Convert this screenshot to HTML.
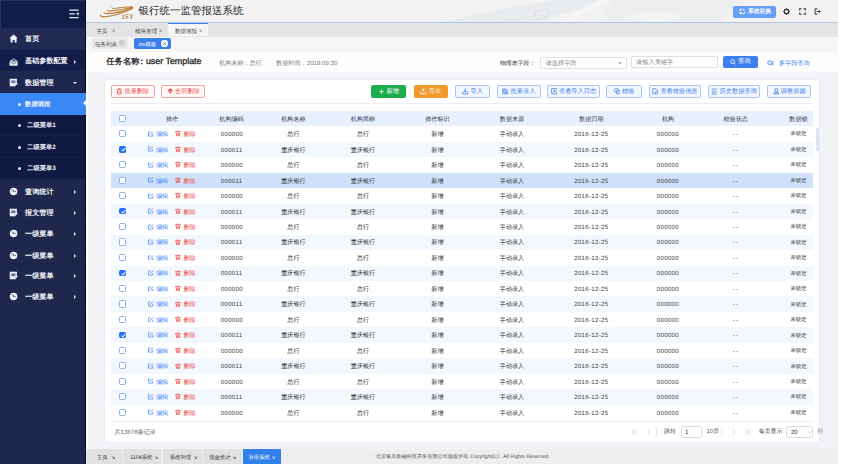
<!DOCTYPE html>
<html><head><meta charset="utf-8">
<style>
*{margin:0;padding:0;box-sizing:border-box}
html,body{width:841px;height:464px;overflow:hidden;background:#fff;font-family:"Liberation Sans",sans-serif;text-rendering:geometricPrecision}
.abs{position:absolute}
#side{position:absolute;left:0;top:0;width:86px;height:464px;background:#1f284c;border-right:1px solid #050c32}
#side .top{position:absolute;left:0;top:0;width:85px;height:28px;background:#101d48;border-top:1px solid #26305a;border-left:1px solid #26305a}
.mi{position:absolute;left:0;width:85px;color:#f2f4fa;font-size:6.9px;font-weight:bold}
.mi .t{position:absolute;transform:translateY(-50%);white-space:nowrap;line-height:1}
.mi .ic{position:absolute;left:8.6px;width:9.2px;height:9.2px}
.mi .ar{position:absolute;left:73.5px;margin-top:-2px;width:0;height:0;border-left:2.6px solid #e6e9f2;border-top:2px solid transparent;border-bottom:2px solid transparent}
.mi .dn{position:absolute;left:72.5px;margin-top:-1px;width:0;height:0;border-top:2.6px solid #e6e9f2;border-left:2.2px solid transparent;border-right:2.2px solid transparent}
.mi .dot{position:absolute;left:17.5px;width:3.1px;height:3.1px;border-radius:50%;background:#e8f0ff}
.act .notch{position:absolute;right:0;top:50%;margin-top:-3.5px;width:0;height:0;border-right:3.5px solid #f4f5f8;border-top:3.5px solid transparent;border-bottom:3.5px solid transparent}
#hdr{position:absolute;left:86px;top:0;width:752px;height:23px;background:#f2f2f2;border-bottom:1px solid #b4c4dc;overflow:hidden}
#tabs{position:absolute;left:86px;top:23px;width:752px;height:14px;background:#e4e4e4}
.tab{position:absolute;top:0;height:14px;font-size:5.55px;color:#444;line-height:14px;white-space:nowrap}
#subtabs{position:absolute;left:86px;top:37px;width:752px;height:14.5px;background:#f5f5f5}
.chip{position:absolute;top:1.8px;height:10px;border-radius:2px;font-size:5.5px;line-height:10.4px;padding-top:2px;white-space:nowrap;padding-left:3px}
#titlerow{position:absolute;left:86px;top:51.5px;width:752px;height:20.5px;background:#fdfdfd}
#page{position:absolute;left:88px;top:72px;width:750px;height:378px;background:#f2f3f7}
#card{position:absolute;left:103.5px;top:78.5px;width:716.5px;height:364px;background:#fff;border-radius:2px;border:0.6px solid #e8ecf3}
.btn{position:absolute;top:85.3px;height:12.3px;border-radius:2px;font-size:6.2px;white-space:nowrap;display:flex;align-items:center;justify-content:center}
.btn span{position:relative;top:0.35px}
.btn svg{margin-right:1.8px;flex:none}
.ob{border:0.8px solid #a9c7f4;background:#f2f7ff;color:#3a7ce8}
.rb{border:0.8px solid #f4a0a0;background:#fff9f9;color:#ee4f4f}
#thead{position:absolute;left:111px;top:110.6px;width:702px;height:15.7px;background:#e9f0fd}
.th{position:absolute;top:1.2px;line-height:15.7px;transform:translateX(-50%);font-size:6.1px;font-weight:500;color:#2d3450;white-space:nowrap}
.tr{position:absolute;left:111px;width:702px;height:15.47px}
.c{position:absolute;top:0.9px;line-height:15.47px;font-size:6.1px;color:#2a2a2a;white-space:nowrap}
.c.cc{transform:translateX(-50%)}
.c.sm{font-size:5.3px;color:#383838;top:1.2px}
.num{letter-spacing:0.3px;color:#3c3c3c}
.cb{position:absolute;left:8px;top:3.9px;width:7.1px;height:7.2px;border:0.9px solid #8ab2f4;border-radius:1.5px;background:#fff;display:block}
.cb.ck{background:#1f6ff2;border-color:#1f6ff2;top:4.2px;width:6.9px;height:6.6px}
.cb svg{position:absolute;left:-0.5px;top:-0.5px;width:6.8px;height:6.8px}
.ei{position:absolute;left:37.1px;top:4.6px}
.di{position:absolute;left:64px;top:4.2px}
</style></head><body>

<!-- sidebar -->
<div id="side"><div class="top"><svg class="abs" style="left:67.6px;top:8px" width="10" height="9.5" viewBox="0 0 10 9.5"><path d="M0.3 1H9.6M0.3 8.5H9.6M0.3 4.75H5.8" stroke="#e6e9f2" stroke-width="1.25"/><path d="M9.6 3L7 4.75L9.6 6.5Z" fill="#e6e9f2"/></svg></div>
<div class="mi n" style="top:28px;height:22px;background:#232a52;border-bottom:0.8px solid #1a2246"><svg class="ic" style="top:6.20px" viewBox="0 0 10 10"><path d="M5 0.6L0.4 4.6H1.7V9.2H4V6.6H6V9.2H8.3V4.6H9.6Z" fill="#eef0f8"/></svg><span class="t" style="left:25.1px;top:11.90px;font-size:7.1px">首页</span></div>
<div class="mi r" style="top:50px;height:21px;background:#131c48;border-bottom:0.8px solid #1a2246"><svg class="ic" style="top:6.70px" viewBox="0 0 10 10"><path d="M0.6 4.6L5 1.4L9.4 4.6V9.4H0.6Z" fill="#eef0f8"/><path d="M0.6 4.6L5 7.6L9.4 4.6" stroke="#1f284c" stroke-width="0.7" fill="none"/><circle cx="5.2" cy="3.6" r="2.1" fill="#6a76a8"/></svg><span class="t" style="left:25.1px;top:12.40px;font-size:7.1px">基础参数配置</span><i class="ar" style="top:11.70px"></i></div>
<div class="mi d" style="top:71px;height:22px;background:#1f2750;border-bottom:0.8px solid #1a2246"><svg class="ic" style="top:6.90px" viewBox="0 0 10 10"><path d="M0.8 0.8H8.6V5.8L5.8 9H0.8Z" fill="#eef0f8"/><rect x="2.4" y="2.6" width="4.6" height="3" fill="#6a76a8"/><path d="M6 9.2L9.4 5.8" stroke="#eef0f8" stroke-width="1"/></svg><span class="t" style="left:25.1px;top:12.60px;font-size:7.1px">数据管理</span><i class="dn" style="top:11.50px"></i></div>
<div class="mi act" style="top:93px;height:21.8px;width:86px;background:#3a87f6;border-bottom:none"><i class="dot" style="top:10.10px"></i><span class="t" style="left:25.1px;top:12.10px;font-size:6.3px">数据填报</span><i class="notch"></i></div>
<div class="mi sub" style="top:115px;height:21px;background:#0f1942;border-bottom:0.8px solid #17204a"><i class="dot" style="top:9.10px"></i><span class="t" style="left:27.1px;top:11.10px;font-size:6.3px">二级菜单1</span></div>
<div class="mi sub" style="top:136px;height:22px;background:#0f1942;border-bottom:0.8px solid #17204a"><i class="dot" style="top:9.80px"></i><span class="t" style="left:27.1px;top:11.80px;font-size:6.3px">二级菜单2</span></div>
<div class="mi sub" style="top:158px;height:21px;background:#0f1942;border-bottom:0.8px solid #17204a"><i class="dot" style="top:9.10px"></i><span class="t" style="left:27.1px;top:11.10px;font-size:6.3px">二级菜单3</span></div>
<div class="mi r" style="top:179px;height:21.8px;background:#1f284c;border-bottom:0.8px solid #1a2246"><svg class="ic" style="top:8.40px" viewBox="0 0 10 10"><circle cx="5" cy="5" r="4.1" fill="#eef0f8"/><path d="M2.6 3.2Q4.2 2.6 5 4.2Q6 5.6 7.4 4.8" stroke="#5a6696" stroke-width="1" fill="none"/><circle cx="5" cy="4.6" r="0.9" fill="#5a6696"/></svg><span class="t" style="left:25.1px;top:14.10px;font-size:7.1px">查询统计</span><i class="ar" style="top:13.40px"></i></div>
<div class="mi r" style="top:200.8px;height:21.4px;background:#1f284c;border-bottom:0.8px solid #1a2246"><svg class="ic" style="top:7.60px" viewBox="0 0 10 10"><path d="M0.8 0.8H8.6V5.8L5.8 9H0.8Z" fill="#eef0f8"/><rect x="2.4" y="2.6" width="4.6" height="3" fill="#6a76a8"/><path d="M6 9.2L9.4 5.8" stroke="#eef0f8" stroke-width="1"/></svg><span class="t" style="left:25.1px;top:13.30px;font-size:7.1px">报文管理</span><i class="ar" style="top:12.60px"></i></div>
<div class="mi r" style="top:222.2px;height:20.8px;background:#1f284c;border-bottom:0.8px solid #1a2246"><svg class="ic" style="top:6.70px" viewBox="0 0 10 10"><circle cx="5" cy="5" r="4.1" fill="#eef0f8"/><path d="M2.6 3.2Q4.2 2.6 5 4.2Q6 5.6 7.4 4.8" stroke="#5a6696" stroke-width="1" fill="none"/><circle cx="5" cy="4.6" r="0.9" fill="#5a6696"/></svg><span class="t" style="left:25.1px;top:12.40px;font-size:7.1px">一级菜单</span><i class="ar" style="top:11.70px"></i></div>
<div class="mi r" style="top:243px;height:21px;background:#1f284c;border-bottom:0.8px solid #1a2246"><svg class="ic" style="top:7.90px" viewBox="0 0 10 10"><circle cx="5" cy="5" r="4.1" fill="#eef0f8"/><path d="M2.6 3.2Q4.2 2.6 5 4.2Q6 5.6 7.4 4.8" stroke="#5a6696" stroke-width="1" fill="none"/><circle cx="5" cy="4.6" r="0.9" fill="#5a6696"/></svg><span class="t" style="left:25.1px;top:13.60px;font-size:7.1px">一级菜单</span><i class="ar" style="top:12.90px"></i></div>
<div class="mi r" style="top:264px;height:20.5px;background:#1f284c;border-bottom:0.8px solid #1a2246"><svg class="ic" style="top:7.20px" viewBox="0 0 10 10"><path d="M0.8 0.8H8.6V5.8L5.8 9H0.8Z" fill="#eef0f8"/><rect x="2.4" y="2.6" width="4.6" height="3" fill="#6a76a8"/><path d="M6 9.2L9.4 5.8" stroke="#eef0f8" stroke-width="1"/></svg><span class="t" style="left:25.1px;top:12.90px;font-size:7.1px">一级菜单</span><i class="ar" style="top:12.20px"></i></div>
<div class="mi r" style="top:284.5px;height:20.8px;background:#1f284c;border-bottom:0.8px solid #1a2246"><svg class="ic" style="top:7.40px" viewBox="0 0 10 10"><circle cx="5" cy="5" r="4.1" fill="#eef0f8"/><path d="M2.6 3.2Q4.2 2.6 5 4.2Q6 5.6 7.4 4.8" stroke="#5a6696" stroke-width="1" fill="none"/><circle cx="5" cy="4.6" r="0.9" fill="#5a6696"/></svg><span class="t" style="left:25.1px;top:13.10px;font-size:7.1px">一级菜单</span><i class="ar" style="top:12.40px"></i></div>
</div>
<!-- header -->
<div id="hdr">
  <svg class="abs" style="left:-86px;top:0px" width="140" height="22" viewBox="0 0 140 22">
    <g fill="none" stroke="#bb7e3a" stroke-linecap="round">
      <path d="M100.4 15.3Q101.3 17.2 104 16.9Q117 15.8 132.5 8.5" stroke-width="1.35"/>
      <path d="M104 12.5Q104.8 13.8 107 13.7Q119 13.2 132.5 7.9" stroke-width="1.2"/>
      <path d="M107.3 10.2Q108 11.2 110 11.1Q121 10 132.5 7.3" stroke-width="1.1"/>
      <path d="M111.8 7.9Q112.5 8.7 114.5 8.4Q123 7.2 132.5 6.7" stroke-width="1"/>
    </g>
    <text x="121.7" y="18.7" font-family="Liberation Serif" font-size="7" font-weight="bold" letter-spacing="0.3" fill="#b9803e">IST</text>
  </svg>
  <svg class="abs" style="left:0;top:0" width="752" height="22" viewBox="86 0 752 22">
    <g opacity="0.55">
      <path d="M440 22L520 6L560 0H600L540 22Z" fill="#e3e8ec"/>
      <path d="M470 18L560 2" stroke="#dde3e8" stroke-width="1.2"/>
      <path d="M500 22L585 8" stroke="#d6dde3" stroke-width="1"/>
      <path d="M555 22L600 0H612L570 22Z" fill="#f8f9fa"/>
      <rect x="535" y="10" width="14" height="8" transform="rotate(-20 542 14)" fill="none" stroke="#d8c4c8" stroke-width="0.8"/>
      <path d="M612 0L600 22H720L740 0Z" fill="#e9ecef"/>
      <ellipse cx="655" cy="17" rx="26" ry="5" fill="#f4f5f6"/>
      <path d="M630 8H700" stroke="#e0e4e8" stroke-width="2"/>
    </g>
  </svg>
  <div class="abs" style="left:52.5px;top:5.2px;font-size:10.5px;font-weight:500;color:#2a2a2a;white-space:nowrap">银行统一监管报送系统</div>
  <div class="abs" style="left:647px;top:5.5px;width:43px;height:12px;background:#66a0f5;border-radius:2px;color:#fff;font-size:5.8px;line-height:12px;white-space:nowrap">
    <svg class="abs" style="left:5.8px;top:2.8px" width="6.6" height="6.6" viewBox="0 0 10 10"><path d="M1.2 4.6A3.6 3.6 0 0 1 4.4 1.2" stroke="#fff" stroke-width="1.6" fill="none"/><circle cx="7.2" cy="2.8" r="1.6" fill="#d8e6fc"/><rect x="1" y="6" width="3.4" height="3.2" rx="0.6" fill="#fff"/><path d="M8.8 5.6A3.6 3.6 0 0 1 5.6 8.8" stroke="#fff" stroke-width="1.6" fill="none"/></svg>
    <span class="abs" style="left:15px;top:0.5px;font-weight:bold">系统切换</span>
  </div>
  <svg class="abs" style="left:697px;top:8px" width="7" height="7" viewBox="0 0 10 10"><circle cx="5" cy="5" r="3.2" fill="none" stroke="#333" stroke-width="1.8"/><path d="M5 0.5V2M5 8V9.5M0.5 5H2M8 5H9.5M1.8 1.8L2.8 2.8M7.2 7.2L8.2 8.2M1.8 8.2L2.8 7.2M7.2 2.8L8.2 1.8" stroke="#333" stroke-width="1.5"/></svg>
  <svg class="abs" style="left:712.5px;top:8px" width="7" height="7" viewBox="0 0 10 10"><path d="M1 3.5V1H3.5M6.5 1H9V3.5M9 6.5V9H6.5M3.5 9H1V6.5" stroke="#333" stroke-width="1.6" fill="none"/></svg>
  <svg class="abs" style="left:727.5px;top:8px" width="7" height="7" viewBox="0 0 10 10"><path d="M5 1.2H1.5V8.8H5" stroke="#333" stroke-width="1.4" fill="none"/><path d="M3.8 5H9M7 3L9 5L7 7" stroke="#333" stroke-width="1.3" fill="none"/></svg>
</div>

<!-- tabs -->
<div id="tabs">
  <div class="tab" style="left:10.5px;top:1.5px">主页</div><div class="abs" style="left:0;top:0"><svg width="3.4" height="3.4" viewBox="0 0 4 4" style="position:absolute;left:25.8px;top:6px"><path d="M0.4 0.4L3.6 3.6M3.6 0.4L0.4 3.6" stroke="#555" stroke-width="0.6"/></svg></div>
  <div class="tab" style="left:49px;top:1.5px">模块管理</div><div class="abs" style="left:0;top:0"><svg width="3.4" height="3.4" viewBox="0 0 4 4" style="position:absolute;left:72.8px;top:6px"><path d="M0.4 0.4L3.6 3.6M3.6 0.4L0.4 3.6" stroke="#555" stroke-width="0.6"/></svg></div>
  <div class="abs" style="left:82.4px;top:0;width:39.7px;height:13.2px;background:#f5f5f5;border-top:1px solid #3d86f0"></div>
  <div class="tab" style="left:88.9px;top:1.5px">数据填报</div><div class="abs" style="left:0;top:0"><svg width="3.4" height="3.4" viewBox="0 0 4 4" style="position:absolute;left:112.7px;top:6px"><path d="M0.4 0.4L3.6 3.6M3.6 0.4L0.4 3.6" stroke="#555" stroke-width="0.6"/></svg></div>
</div>
<div id="subtabs">
  <div class="chip" style="left:6.2px;width:35.5px;height:10.4px;top:1.2px;background:#e8e8e8;color:#4a4a4a;padding-left:2.8px">任务列表<span class="abs" style="left:27.1px;top:2.2px;width:6px;height:6px;border-radius:50%;background:#c8c8c8"></span><svg width="3.4" height="3.4" viewBox="0 0 4 4" style="position:absolute;left:28.4px;top:3.5px"><path d="M0.4 0.4L3.6 3.6M3.6 0.4L0.4 3.6" stroke="#f4f4f4" stroke-width="0.8"/></svg></div>
  <div class="chip" style="left:48.4px;width:36.3px;height:10.4px;top:1.2px;background:#3a7ee8;color:#fff;padding-left:4.1px"><span style="font-size:5.3px">dis</span>模板<span class="abs" style="left:27px;top:2.2px;width:6.2px;height:6.2px;border-radius:50%;background:#fff"></span><svg width="3.4" height="3.4" viewBox="0 0 4 4" style="position:absolute;left:28.4px;top:3.6px"><path d="M0.4 0.4L3.6 3.6M3.6 0.4L0.4 3.6" stroke="#3a7ee8" stroke-width="0.9"/></svg></div>
</div>

<!-- title row -->
<div id="titlerow">
  <div class="abs" style="left:20.3px;top:4.5px;font-size:8.3px;font-weight:bold;color:#262626;white-space:nowrap">任务名称<span style="margin-left:-1.9px">：</span><span style="font-size:8.9px;font-weight:normal;-webkit-text-stroke:0.3px #262626">user Template</span></div>
  <div class="abs" style="left:133.3px;top:7.1px;font-size:6.1px;color:#7a7a7a;white-space:nowrap">机构名称：总行</div>
  <div class="abs" style="left:190.3px;top:7.1px;font-size:6.1px;color:#7a7a7a;white-space:nowrap">数据时间：2019.09.30</div>
  <div class="abs" style="left:414px;top:7.3px;font-size:5.85px;color:#333;white-space:nowrap">物理表字段：</div>
  <div class="abs" style="left:453.6px;top:5px;width:87.4px;height:12px;border:0.8px solid #dcdfe6;border-radius:2px;background:#fff;font-size:6.15px;color:#8a8a8a;line-height:11.4px;padding-left:5px;white-space:nowrap">请选择字段<svg class="abs" style="left:77.5px;top:4.8px" width="4" height="2.5" viewBox="0 0 8 5"><path d="M0.5 0.5H7.5L4 4.5Z" fill="#999"/></svg></div>
  <div class="abs" style="left:544.6px;top:4.4px;width:87.4px;height:12px;border:0.8px solid #dcdfe6;border-radius:2px;background:#fff;font-size:6.2px;color:#8a8a8a;line-height:11.4px;padding-left:4.5px;white-space:nowrap">请输入关键字</div>
  <div class="abs" style="left:637.4px;top:4.4px;width:34.6px;height:12px;border-radius:2px;background:#3b7ff0;font-size:6.3px;color:#fff;line-height:12.6px;white-space:nowrap"><svg class="abs" style="left:7px;top:3.2px" width="6" height="6" viewBox="0 0 10 10"><circle cx="4.3" cy="4.3" r="3.2" stroke="#fff" stroke-width="1.4" fill="none"/><path d="M6.6 6.6L9 9" stroke="#fff" stroke-width="1.4"/></svg><span class="abs" style="left:14.6px">查询</span></div>
  <svg class="abs" style="left:681.3px;top:8px" width="8" height="6" viewBox="0 0 12 9"><circle cx="4" cy="4" r="2.8" stroke="#3b7ff0" stroke-width="1.3" fill="none"/><path d="M6 6L7.6 7.8M9 1.5V7.5" stroke="#3b7ff0" stroke-width="1.2"/></svg>
  <div class="abs" style="left:693px;top:7.5px;font-size:6.1px;color:#3b7ff0;white-space:nowrap">多字段查询</div>
</div>

<div id="page"></div>
<div id="card"></div>
<!-- buttons -->
<div class="btn rb" style="left:110.6px;width:44.2px"><svg width="6.5" height="6.5" viewBox="0 0 10 10"><path d="M1 2.6H9M3.6 2.6V1H6.4V2.6M2.2 3.8V9.2H7.8V3.8M2.2 6.2H7.8" stroke="#ee4f4f" stroke-width="1.2" fill="none"/></svg><span>批量删除</span></div>
<div class="btn rb" style="left:161.2px;width:43.8px"><svg width="6.5" height="6.5" viewBox="0 0 10 10"><path d="M1.2 4.2L3.6 1.2H6.6L9 4.2L5 9.2Z" fill="#ee4f4f"/><path d="M3.2 4.2L5 6.6L7 4.2" stroke="#fff" stroke-width="0.9" fill="none"/></svg><span>全部删除</span></div>
<div class="btn ob" style="left:455.1px;width:34.8px"><svg width="6.5" height="6.5" viewBox="0 0 10 10"><path d="M5 0.8V6.2M2.8 4L5 6.2L7.2 4M1 5.6V8.9H9V5.6" stroke="#3a7ce8" stroke-width="1.3" fill="none"/></svg><span>导入</span></div>
<div class="btn ob" style="left:497px;width:43.6px"><svg width="6.5" height="6.5" viewBox="0 0 10 10"><path d="M8.6 4.8V8.8H1.2V1.4H5.2" stroke="#3a7ce8" stroke-width="1.2" fill="none"/><path d="M4 6L8.8 1.2" stroke="#3a7ce8" stroke-width="1.2"/><circle cx="4.9" cy="5.1" r="2.6" stroke="#3a7ce8" stroke-width="1.1" fill="none"/></svg><span>批量录入</span></div>
<div class="btn ob" style="left:547px;width:52.8px"><svg width="6.5" height="6.5" viewBox="0 0 10 10"><path d="M8.8 3V1H1V9H8.8V7" stroke="#3a7ce8" stroke-width="1.2" fill="none"/><path d="M9.2 5H4.2M6 3.2L4.2 5L6 6.8" stroke="#3a7ce8" stroke-width="1.2" fill="none"/></svg><span>查看导入日志</span></div>
<div class="btn ob" style="left:606.2px;width:35.5px"><svg width="6.5" height="6.5" viewBox="0 0 10 10"><rect x="0.9" y="0.9" width="5.6" height="5.6" rx="1.6" stroke="#3a7ce8" stroke-width="1.1" fill="none"/><rect x="3.5" y="3.5" width="5.6" height="5.6" rx="1.6" stroke="#3a7ce8" stroke-width="1.1" fill="none"/></svg><span>校验</span></div>
<div class="btn ob" style="left:648.6px;width:52.4px"><svg width="6.5" height="6.5" viewBox="0 0 10 10"><path d="M5.5 9H1.2V1H6.2L8.4 3.2V5.2" stroke="#3a7ce8" stroke-width="1.1" fill="none"/><circle cx="6.8" cy="7.2" r="2.2" stroke="#3a7ce8" stroke-width="1" fill="none"/><path d="M5.8 7.2L6.6 8L7.9 6.6" stroke="#3a7ce8" stroke-width="0.8" fill="none"/></svg><span>查看校验信息</span></div>
<div class="btn ob" style="left:707.8px;width:52.4px"><svg width="6.5" height="6.5" viewBox="0 0 10 10"><path d="M1 1.5H9M1 4.3H5.5M1 7.1H5.5M1 9.4H9" stroke="#3a7ce8" stroke-width="1.1" fill="none"/><path d="M7 4V7.6L9.4 5.8Z" fill="#3a7ce8"/></svg><span>历史数据查询</span></div>
<div class="btn ob" style="left:767.2px;width:43.8px"><svg width="6.5" height="6.5" viewBox="0 0 10 10"><circle cx="5" cy="3.2" r="2.3" stroke="#3a7ce8" stroke-width="1.15" fill="none"/><path d="M1.2 9.2Q1.2 5.8 5 5.8Q8.8 5.8 8.8 9.2Z" stroke="#3a7ce8" stroke-width="1.15" fill="none"/><path d="M3.6 7.6H6.4" stroke="#3a7ce8" stroke-width="0.9"/></svg><span>调整原因</span></div>
<div class="btn" style="left:371.4px;width:35px;background:#1cad4e;color:#fff;border:none"><svg width="5.2" height="5.2" viewBox="0 0 10 10" style="margin-right:2.4px"><path d="M5 0.5V9.5M0.5 5H9.5" stroke="#fff" stroke-width="1.5"/></svg><span>新增</span></div>
<div class="btn" style="left:413.5px;width:34.5px;background:#f0992c;color:#fff;border:none"><svg width="6.5" height="6.5" viewBox="0 0 10 10"><path d="M5 6.6V1.2M2.8 3.4L5 1.2L7.2 3.4M1 5.6V8.9H9V5.6" stroke="#fff" stroke-width="1.3" fill="none"/></svg><span>导出</span></div>
<div class="abs" style="left:110.8px;top:103px;width:702px;height:0.8px;background:#eceef2"></div>

<!-- table header -->
<div id="thead">
  <i class="cb" style="top:4.5px"></i>
  <span class="th" style="left:61px">操作</span>
  <span class="th" style="left:120.5px">机构编码</span>
  <span class="th" style="left:182.4px">机构名称</span>
  <span class="th" style="left:252px">机构简称</span>
  <span class="th" style="left:326.4px">操作标识</span>
  <span class="th" style="left:401px">数据来源</span>
  <span class="th" style="left:480.5px">数据日期</span>
  <span class="th" style="left:557px">机构</span>
  <span class="th" style="left:624.7px">校验状态</span>
  <span class="th" style="left:687.5px">数据锁</span>
</div>
<div class="tr" style="top:126.30px;background:#ffffff"><i class="cb"></i><svg class="ei" width="5.6" height="5.8" viewBox="0 0 10 10"><path d="M8.6 5V9H1V1.4H5" stroke="#3d87f5" stroke-width="1.25" fill="none"/><path d="M3.8 6.3L9.2 0.9" stroke="#3d87f5" stroke-width="1.4"/></svg><span class="c l" style="left:45px;color:#3d87f5">编辑</span><svg class="di" width="5.8" height="6.2" viewBox="0 0 10 11"><path d="M5 0.6V2.2M0.8 2.6H9.2V4.4M0.8 2.6V4.4M2.2 5.2H7.8V10.2H2.2Z M2.2 7.6H7.8" stroke="#f04848" stroke-width="1.3" fill="none"/></svg><span class="c l" style="left:72.4px;color:#f04848">删除</span><span class="c num" style="left:109.8px">000000</span><span class="c cc" style="left:182.4px">总行</span><span class="c cc" style="left:252px">总行</span><span class="c cc" style="left:326.4px">新增</span><span class="c cc" style="left:401px">手动录入</span><span class="c num" style="left:463.2px">2016-12-25</span><span class="c num" style="left:545.8px">000000</span><span class="c cc" style="left:624.7px;color:#555;letter-spacing:0.9px">--</span><span class="c cc sm" style="left:687.5px">未锁定</span></div>
<div class="tr" style="top:141.77px;background:#f3f8ff"><i class="cb ck"><svg viewBox="0 0 10 10"><path d="M2.3 5.2 L4.2 7 L7.8 3.2" stroke="#fff" stroke-width="1.5" fill="none"/></svg></i><svg class="ei" width="5.6" height="5.8" viewBox="0 0 10 10"><path d="M8.6 5V9H1V1.4H5" stroke="#3d87f5" stroke-width="1.25" fill="none"/><path d="M3.8 6.3L9.2 0.9" stroke="#3d87f5" stroke-width="1.4"/></svg><span class="c l" style="left:45px;color:#3d87f5">编辑</span><svg class="di" width="5.8" height="6.2" viewBox="0 0 10 11"><path d="M5 0.6V2.2M0.8 2.6H9.2V4.4M0.8 2.6V4.4M2.2 5.2H7.8V10.2H2.2Z M2.2 7.6H7.8" stroke="#f04848" stroke-width="1.3" fill="none"/></svg><span class="c l" style="left:72.4px;color:#f04848">删除</span><span class="c num" style="left:109.8px">000011</span><span class="c cc" style="left:182.4px">重庆银行</span><span class="c cc" style="left:252px">重庆银行</span><span class="c cc" style="left:326.4px">新增</span><span class="c cc" style="left:401px">手动录入</span><span class="c num" style="left:463.2px">2016-12-25</span><span class="c num" style="left:545.8px">000000</span><span class="c cc" style="left:624.7px;color:#555;letter-spacing:0.9px">--</span><span class="c cc sm" style="left:687.5px">未锁定</span></div>
<div class="tr" style="top:157.24px;background:#ffffff"><i class="cb"></i><svg class="ei" width="5.6" height="5.8" viewBox="0 0 10 10"><path d="M8.6 5V9H1V1.4H5" stroke="#3d87f5" stroke-width="1.25" fill="none"/><path d="M3.8 6.3L9.2 0.9" stroke="#3d87f5" stroke-width="1.4"/></svg><span class="c l" style="left:45px;color:#3d87f5">编辑</span><svg class="di" width="5.8" height="6.2" viewBox="0 0 10 11"><path d="M5 0.6V2.2M0.8 2.6H9.2V4.4M0.8 2.6V4.4M2.2 5.2H7.8V10.2H2.2Z M2.2 7.6H7.8" stroke="#f04848" stroke-width="1.3" fill="none"/></svg><span class="c l" style="left:72.4px;color:#f04848">删除</span><span class="c num" style="left:109.8px">000000</span><span class="c cc" style="left:182.4px">总行</span><span class="c cc" style="left:252px">总行</span><span class="c cc" style="left:326.4px">新增</span><span class="c cc" style="left:401px">手动录入</span><span class="c num" style="left:463.2px">2016-12-25</span><span class="c num" style="left:545.8px">000000</span><span class="c cc" style="left:624.7px;color:#555;letter-spacing:0.9px">--</span><span class="c cc sm" style="left:687.5px">未锁定</span></div>
<div class="tr" style="top:172.71px;background:#cfe1fb"><i class="cb"></i><svg class="ei" width="5.6" height="5.8" viewBox="0 0 10 10"><path d="M8.6 5V9H1V1.4H5" stroke="#3d87f5" stroke-width="1.25" fill="none"/><path d="M3.8 6.3L9.2 0.9" stroke="#3d87f5" stroke-width="1.4"/></svg><span class="c l" style="left:45px;color:#3d87f5">编辑</span><svg class="di" width="5.8" height="6.2" viewBox="0 0 10 11"><path d="M5 0.6V2.2M0.8 2.6H9.2V4.4M0.8 2.6V4.4M2.2 5.2H7.8V10.2H2.2Z M2.2 7.6H7.8" stroke="#f04848" stroke-width="1.3" fill="none"/></svg><span class="c l" style="left:72.4px;color:#f04848">删除</span><span class="c num" style="left:109.8px">000011</span><span class="c cc" style="left:182.4px">重庆银行</span><span class="c cc" style="left:252px">重庆银行</span><span class="c cc" style="left:326.4px">新增</span><span class="c cc" style="left:401px">手动录入</span><span class="c num" style="left:463.2px">2016-12-25</span><span class="c num" style="left:545.8px">000000</span><span class="c cc" style="left:624.7px;color:#555;letter-spacing:0.9px">--</span><span class="c cc sm" style="left:687.5px">未锁定</span></div>
<div class="tr" style="top:188.18px;background:#ffffff"><i class="cb"></i><svg class="ei" width="5.6" height="5.8" viewBox="0 0 10 10"><path d="M8.6 5V9H1V1.4H5" stroke="#3d87f5" stroke-width="1.25" fill="none"/><path d="M3.8 6.3L9.2 0.9" stroke="#3d87f5" stroke-width="1.4"/></svg><span class="c l" style="left:45px;color:#3d87f5">编辑</span><svg class="di" width="5.8" height="6.2" viewBox="0 0 10 11"><path d="M5 0.6V2.2M0.8 2.6H9.2V4.4M0.8 2.6V4.4M2.2 5.2H7.8V10.2H2.2Z M2.2 7.6H7.8" stroke="#f04848" stroke-width="1.3" fill="none"/></svg><span class="c l" style="left:72.4px;color:#f04848">删除</span><span class="c num" style="left:109.8px">000000</span><span class="c cc" style="left:182.4px">总行</span><span class="c cc" style="left:252px">总行</span><span class="c cc" style="left:326.4px">新增</span><span class="c cc" style="left:401px">手动录入</span><span class="c num" style="left:463.2px">2016-12-25</span><span class="c num" style="left:545.8px">000000</span><span class="c cc" style="left:624.7px;color:#555;letter-spacing:0.9px">--</span><span class="c cc sm" style="left:687.5px">未锁定</span></div>
<div class="tr" style="top:203.65px;background:#f3f8ff"><i class="cb ck"><svg viewBox="0 0 10 10"><path d="M2.3 5.2 L4.2 7 L7.8 3.2" stroke="#fff" stroke-width="1.5" fill="none"/></svg></i><svg class="ei" width="5.6" height="5.8" viewBox="0 0 10 10"><path d="M8.6 5V9H1V1.4H5" stroke="#3d87f5" stroke-width="1.25" fill="none"/><path d="M3.8 6.3L9.2 0.9" stroke="#3d87f5" stroke-width="1.4"/></svg><span class="c l" style="left:45px;color:#3d87f5">编辑</span><svg class="di" width="5.8" height="6.2" viewBox="0 0 10 11"><path d="M5 0.6V2.2M0.8 2.6H9.2V4.4M0.8 2.6V4.4M2.2 5.2H7.8V10.2H2.2Z M2.2 7.6H7.8" stroke="#f04848" stroke-width="1.3" fill="none"/></svg><span class="c l" style="left:72.4px;color:#f04848">删除</span><span class="c num" style="left:109.8px">000011</span><span class="c cc" style="left:182.4px">重庆银行</span><span class="c cc" style="left:252px">重庆银行</span><span class="c cc" style="left:326.4px">新增</span><span class="c cc" style="left:401px">手动录入</span><span class="c num" style="left:463.2px">2016-12-25</span><span class="c num" style="left:545.8px">000000</span><span class="c cc" style="left:624.7px;color:#555;letter-spacing:0.9px">--</span><span class="c cc sm" style="left:687.5px">未锁定</span></div>
<div class="tr" style="top:219.12px;background:#ffffff"><i class="cb"></i><svg class="ei" width="5.6" height="5.8" viewBox="0 0 10 10"><path d="M8.6 5V9H1V1.4H5" stroke="#3d87f5" stroke-width="1.25" fill="none"/><path d="M3.8 6.3L9.2 0.9" stroke="#3d87f5" stroke-width="1.4"/></svg><span class="c l" style="left:45px;color:#3d87f5">编辑</span><svg class="di" width="5.8" height="6.2" viewBox="0 0 10 11"><path d="M5 0.6V2.2M0.8 2.6H9.2V4.4M0.8 2.6V4.4M2.2 5.2H7.8V10.2H2.2Z M2.2 7.6H7.8" stroke="#f04848" stroke-width="1.3" fill="none"/></svg><span class="c l" style="left:72.4px;color:#f04848">删除</span><span class="c num" style="left:109.8px">000000</span><span class="c cc" style="left:182.4px">总行</span><span class="c cc" style="left:252px">总行</span><span class="c cc" style="left:326.4px">新增</span><span class="c cc" style="left:401px">手动录入</span><span class="c num" style="left:463.2px">2016-12-25</span><span class="c num" style="left:545.8px">000000</span><span class="c cc" style="left:624.7px;color:#555;letter-spacing:0.9px">--</span><span class="c cc sm" style="left:687.5px">未锁定</span></div>
<div class="tr" style="top:234.59px;background:#f3f8ff"><i class="cb"></i><svg class="ei" width="5.6" height="5.8" viewBox="0 0 10 10"><path d="M8.6 5V9H1V1.4H5" stroke="#3d87f5" stroke-width="1.25" fill="none"/><path d="M3.8 6.3L9.2 0.9" stroke="#3d87f5" stroke-width="1.4"/></svg><span class="c l" style="left:45px;color:#3d87f5">编辑</span><svg class="di" width="5.8" height="6.2" viewBox="0 0 10 11"><path d="M5 0.6V2.2M0.8 2.6H9.2V4.4M0.8 2.6V4.4M2.2 5.2H7.8V10.2H2.2Z M2.2 7.6H7.8" stroke="#f04848" stroke-width="1.3" fill="none"/></svg><span class="c l" style="left:72.4px;color:#f04848">删除</span><span class="c num" style="left:109.8px">000011</span><span class="c cc" style="left:182.4px">重庆银行</span><span class="c cc" style="left:252px">重庆银行</span><span class="c cc" style="left:326.4px">新增</span><span class="c cc" style="left:401px">手动录入</span><span class="c num" style="left:463.2px">2016-12-25</span><span class="c num" style="left:545.8px">000000</span><span class="c cc" style="left:624.7px;color:#555;letter-spacing:0.9px">--</span><span class="c cc sm" style="left:687.5px">未锁定</span></div>
<div class="tr" style="top:250.06px;background:#ffffff"><i class="cb"></i><svg class="ei" width="5.6" height="5.8" viewBox="0 0 10 10"><path d="M8.6 5V9H1V1.4H5" stroke="#3d87f5" stroke-width="1.25" fill="none"/><path d="M3.8 6.3L9.2 0.9" stroke="#3d87f5" stroke-width="1.4"/></svg><span class="c l" style="left:45px;color:#3d87f5">编辑</span><svg class="di" width="5.8" height="6.2" viewBox="0 0 10 11"><path d="M5 0.6V2.2M0.8 2.6H9.2V4.4M0.8 2.6V4.4M2.2 5.2H7.8V10.2H2.2Z M2.2 7.6H7.8" stroke="#f04848" stroke-width="1.3" fill="none"/></svg><span class="c l" style="left:72.4px;color:#f04848">删除</span><span class="c num" style="left:109.8px">000000</span><span class="c cc" style="left:182.4px">总行</span><span class="c cc" style="left:252px">总行</span><span class="c cc" style="left:326.4px">新增</span><span class="c cc" style="left:401px">手动录入</span><span class="c num" style="left:463.2px">2016-12-25</span><span class="c num" style="left:545.8px">000000</span><span class="c cc" style="left:624.7px;color:#555;letter-spacing:0.9px">--</span><span class="c cc sm" style="left:687.5px">未锁定</span></div>
<div class="tr" style="top:265.53px;background:#f3f8ff"><i class="cb ck"><svg viewBox="0 0 10 10"><path d="M2.3 5.2 L4.2 7 L7.8 3.2" stroke="#fff" stroke-width="1.5" fill="none"/></svg></i><svg class="ei" width="5.6" height="5.8" viewBox="0 0 10 10"><path d="M8.6 5V9H1V1.4H5" stroke="#3d87f5" stroke-width="1.25" fill="none"/><path d="M3.8 6.3L9.2 0.9" stroke="#3d87f5" stroke-width="1.4"/></svg><span class="c l" style="left:45px;color:#3d87f5">编辑</span><svg class="di" width="5.8" height="6.2" viewBox="0 0 10 11"><path d="M5 0.6V2.2M0.8 2.6H9.2V4.4M0.8 2.6V4.4M2.2 5.2H7.8V10.2H2.2Z M2.2 7.6H7.8" stroke="#f04848" stroke-width="1.3" fill="none"/></svg><span class="c l" style="left:72.4px;color:#f04848">删除</span><span class="c num" style="left:109.8px">000011</span><span class="c cc" style="left:182.4px">重庆银行</span><span class="c cc" style="left:252px">重庆银行</span><span class="c cc" style="left:326.4px">新增</span><span class="c cc" style="left:401px">手动录入</span><span class="c num" style="left:463.2px">2016-12-25</span><span class="c num" style="left:545.8px">000000</span><span class="c cc" style="left:624.7px;color:#555;letter-spacing:0.9px">--</span><span class="c cc sm" style="left:687.5px">未锁定</span></div>
<div class="tr" style="top:281.00px;background:#ffffff"><i class="cb"></i><svg class="ei" width="5.6" height="5.8" viewBox="0 0 10 10"><path d="M8.6 5V9H1V1.4H5" stroke="#3d87f5" stroke-width="1.25" fill="none"/><path d="M3.8 6.3L9.2 0.9" stroke="#3d87f5" stroke-width="1.4"/></svg><span class="c l" style="left:45px;color:#3d87f5">编辑</span><svg class="di" width="5.8" height="6.2" viewBox="0 0 10 11"><path d="M5 0.6V2.2M0.8 2.6H9.2V4.4M0.8 2.6V4.4M2.2 5.2H7.8V10.2H2.2Z M2.2 7.6H7.8" stroke="#f04848" stroke-width="1.3" fill="none"/></svg><span class="c l" style="left:72.4px;color:#f04848">删除</span><span class="c num" style="left:109.8px">000000</span><span class="c cc" style="left:182.4px">总行</span><span class="c cc" style="left:252px">总行</span><span class="c cc" style="left:326.4px">新增</span><span class="c cc" style="left:401px">手动录入</span><span class="c num" style="left:463.2px">2016-12-25</span><span class="c num" style="left:545.8px">000000</span><span class="c cc" style="left:624.7px;color:#555;letter-spacing:0.9px">--</span><span class="c cc sm" style="left:687.5px">未锁定</span></div>
<div class="tr" style="top:296.47px;background:#f3f8ff"><i class="cb"></i><svg class="ei" width="5.6" height="5.8" viewBox="0 0 10 10"><path d="M8.6 5V9H1V1.4H5" stroke="#3d87f5" stroke-width="1.25" fill="none"/><path d="M3.8 6.3L9.2 0.9" stroke="#3d87f5" stroke-width="1.4"/></svg><span class="c l" style="left:45px;color:#3d87f5">编辑</span><svg class="di" width="5.8" height="6.2" viewBox="0 0 10 11"><path d="M5 0.6V2.2M0.8 2.6H9.2V4.4M0.8 2.6V4.4M2.2 5.2H7.8V10.2H2.2Z M2.2 7.6H7.8" stroke="#f04848" stroke-width="1.3" fill="none"/></svg><span class="c l" style="left:72.4px;color:#f04848">删除</span><span class="c num" style="left:109.8px">000011</span><span class="c cc" style="left:182.4px">重庆银行</span><span class="c cc" style="left:252px">重庆银行</span><span class="c cc" style="left:326.4px">新增</span><span class="c cc" style="left:401px">手动录入</span><span class="c num" style="left:463.2px">2016-12-25</span><span class="c num" style="left:545.8px">000000</span><span class="c cc" style="left:624.7px;color:#555;letter-spacing:0.9px">--</span><span class="c cc sm" style="left:687.5px">未锁定</span></div>
<div class="tr" style="top:311.94px;background:#ffffff"><i class="cb"></i><svg class="ei" width="5.6" height="5.8" viewBox="0 0 10 10"><path d="M8.6 5V9H1V1.4H5" stroke="#3d87f5" stroke-width="1.25" fill="none"/><path d="M3.8 6.3L9.2 0.9" stroke="#3d87f5" stroke-width="1.4"/></svg><span class="c l" style="left:45px;color:#3d87f5">编辑</span><svg class="di" width="5.8" height="6.2" viewBox="0 0 10 11"><path d="M5 0.6V2.2M0.8 2.6H9.2V4.4M0.8 2.6V4.4M2.2 5.2H7.8V10.2H2.2Z M2.2 7.6H7.8" stroke="#f04848" stroke-width="1.3" fill="none"/></svg><span class="c l" style="left:72.4px;color:#f04848">删除</span><span class="c num" style="left:109.8px">000000</span><span class="c cc" style="left:182.4px">总行</span><span class="c cc" style="left:252px">总行</span><span class="c cc" style="left:326.4px">新增</span><span class="c cc" style="left:401px">手动录入</span><span class="c num" style="left:463.2px">2016-12-25</span><span class="c num" style="left:545.8px">000000</span><span class="c cc" style="left:624.7px;color:#555;letter-spacing:0.9px">--</span><span class="c cc sm" style="left:687.5px">未锁定</span></div>
<div class="tr" style="top:327.41px;background:#f3f8ff"><i class="cb ck"><svg viewBox="0 0 10 10"><path d="M2.3 5.2 L4.2 7 L7.8 3.2" stroke="#fff" stroke-width="1.5" fill="none"/></svg></i><svg class="ei" width="5.6" height="5.8" viewBox="0 0 10 10"><path d="M8.6 5V9H1V1.4H5" stroke="#3d87f5" stroke-width="1.25" fill="none"/><path d="M3.8 6.3L9.2 0.9" stroke="#3d87f5" stroke-width="1.4"/></svg><span class="c l" style="left:45px;color:#3d87f5">编辑</span><svg class="di" width="5.8" height="6.2" viewBox="0 0 10 11"><path d="M5 0.6V2.2M0.8 2.6H9.2V4.4M0.8 2.6V4.4M2.2 5.2H7.8V10.2H2.2Z M2.2 7.6H7.8" stroke="#f04848" stroke-width="1.3" fill="none"/></svg><span class="c l" style="left:72.4px;color:#f04848">删除</span><span class="c num" style="left:109.8px">000011</span><span class="c cc" style="left:182.4px">重庆银行</span><span class="c cc" style="left:252px">重庆银行</span><span class="c cc" style="left:326.4px">新增</span><span class="c cc" style="left:401px">手动录入</span><span class="c num" style="left:463.2px">2016-12-25</span><span class="c num" style="left:545.8px">000000</span><span class="c cc" style="left:624.7px;color:#555;letter-spacing:0.9px">--</span><span class="c cc sm" style="left:687.5px">未锁定</span></div>
<div class="tr" style="top:342.88px;background:#ffffff"><i class="cb"></i><svg class="ei" width="5.6" height="5.8" viewBox="0 0 10 10"><path d="M8.6 5V9H1V1.4H5" stroke="#3d87f5" stroke-width="1.25" fill="none"/><path d="M3.8 6.3L9.2 0.9" stroke="#3d87f5" stroke-width="1.4"/></svg><span class="c l" style="left:45px;color:#3d87f5">编辑</span><svg class="di" width="5.8" height="6.2" viewBox="0 0 10 11"><path d="M5 0.6V2.2M0.8 2.6H9.2V4.4M0.8 2.6V4.4M2.2 5.2H7.8V10.2H2.2Z M2.2 7.6H7.8" stroke="#f04848" stroke-width="1.3" fill="none"/></svg><span class="c l" style="left:72.4px;color:#f04848">删除</span><span class="c num" style="left:109.8px">000000</span><span class="c cc" style="left:182.4px">总行</span><span class="c cc" style="left:252px">总行</span><span class="c cc" style="left:326.4px">新增</span><span class="c cc" style="left:401px">手动录入</span><span class="c num" style="left:463.2px">2016-12-25</span><span class="c num" style="left:545.8px">000000</span><span class="c cc" style="left:624.7px;color:#555;letter-spacing:0.9px">--</span><span class="c cc sm" style="left:687.5px">未锁定</span></div>
<div class="tr" style="top:358.35px;background:#f3f8ff"><i class="cb"></i><svg class="ei" width="5.6" height="5.8" viewBox="0 0 10 10"><path d="M8.6 5V9H1V1.4H5" stroke="#3d87f5" stroke-width="1.25" fill="none"/><path d="M3.8 6.3L9.2 0.9" stroke="#3d87f5" stroke-width="1.4"/></svg><span class="c l" style="left:45px;color:#3d87f5">编辑</span><svg class="di" width="5.8" height="6.2" viewBox="0 0 10 11"><path d="M5 0.6V2.2M0.8 2.6H9.2V4.4M0.8 2.6V4.4M2.2 5.2H7.8V10.2H2.2Z M2.2 7.6H7.8" stroke="#f04848" stroke-width="1.3" fill="none"/></svg><span class="c l" style="left:72.4px;color:#f04848">删除</span><span class="c num" style="left:109.8px">000011</span><span class="c cc" style="left:182.4px">重庆银行</span><span class="c cc" style="left:252px">重庆银行</span><span class="c cc" style="left:326.4px">新增</span><span class="c cc" style="left:401px">手动录入</span><span class="c num" style="left:463.2px">2016-12-25</span><span class="c num" style="left:545.8px">000000</span><span class="c cc" style="left:624.7px;color:#555;letter-spacing:0.9px">--</span><span class="c cc sm" style="left:687.5px">未锁定</span></div>
<div class="tr" style="top:373.82px;background:#ffffff"><i class="cb"></i><svg class="ei" width="5.6" height="5.8" viewBox="0 0 10 10"><path d="M8.6 5V9H1V1.4H5" stroke="#3d87f5" stroke-width="1.25" fill="none"/><path d="M3.8 6.3L9.2 0.9" stroke="#3d87f5" stroke-width="1.4"/></svg><span class="c l" style="left:45px;color:#3d87f5">编辑</span><svg class="di" width="5.8" height="6.2" viewBox="0 0 10 11"><path d="M5 0.6V2.2M0.8 2.6H9.2V4.4M0.8 2.6V4.4M2.2 5.2H7.8V10.2H2.2Z M2.2 7.6H7.8" stroke="#f04848" stroke-width="1.3" fill="none"/></svg><span class="c l" style="left:72.4px;color:#f04848">删除</span><span class="c num" style="left:109.8px">000000</span><span class="c cc" style="left:182.4px">总行</span><span class="c cc" style="left:252px">总行</span><span class="c cc" style="left:326.4px">新增</span><span class="c cc" style="left:401px">手动录入</span><span class="c num" style="left:463.2px">2016-12-25</span><span class="c num" style="left:545.8px">000000</span><span class="c cc" style="left:624.7px;color:#555;letter-spacing:0.9px">--</span><span class="c cc sm" style="left:687.5px">未锁定</span></div>
<div class="tr" style="top:389.29px;background:#f3f8ff"><i class="cb"></i><svg class="ei" width="5.6" height="5.8" viewBox="0 0 10 10"><path d="M8.6 5V9H1V1.4H5" stroke="#3d87f5" stroke-width="1.25" fill="none"/><path d="M3.8 6.3L9.2 0.9" stroke="#3d87f5" stroke-width="1.4"/></svg><span class="c l" style="left:45px;color:#3d87f5">编辑</span><svg class="di" width="5.8" height="6.2" viewBox="0 0 10 11"><path d="M5 0.6V2.2M0.8 2.6H9.2V4.4M0.8 2.6V4.4M2.2 5.2H7.8V10.2H2.2Z M2.2 7.6H7.8" stroke="#f04848" stroke-width="1.3" fill="none"/></svg><span class="c l" style="left:72.4px;color:#f04848">删除</span><span class="c num" style="left:109.8px">000011</span><span class="c cc" style="left:182.4px">重庆银行</span><span class="c cc" style="left:252px">重庆银行</span><span class="c cc" style="left:326.4px">新增</span><span class="c cc" style="left:401px">手动录入</span><span class="c num" style="left:463.2px">2016-12-25</span><span class="c num" style="left:545.8px">000000</span><span class="c cc" style="left:624.7px;color:#555;letter-spacing:0.9px">--</span><span class="c cc sm" style="left:687.5px">未锁定</span></div>
<div class="tr" style="top:404.76px;background:#ffffff"><i class="cb"></i><svg class="ei" width="5.6" height="5.8" viewBox="0 0 10 10"><path d="M8.6 5V9H1V1.4H5" stroke="#3d87f5" stroke-width="1.25" fill="none"/><path d="M3.8 6.3L9.2 0.9" stroke="#3d87f5" stroke-width="1.4"/></svg><span class="c l" style="left:45px;color:#3d87f5">编辑</span><svg class="di" width="5.8" height="6.2" viewBox="0 0 10 11"><path d="M5 0.6V2.2M0.8 2.6H9.2V4.4M0.8 2.6V4.4M2.2 5.2H7.8V10.2H2.2Z M2.2 7.6H7.8" stroke="#f04848" stroke-width="1.3" fill="none"/></svg><span class="c l" style="left:72.4px;color:#f04848">删除</span><span class="c num" style="left:109.8px">000000</span><span class="c cc" style="left:182.4px">总行</span><span class="c cc" style="left:252px">总行</span><span class="c cc" style="left:326.4px">新增</span><span class="c cc" style="left:401px">手动录入</span><span class="c num" style="left:463.2px">2016-12-25</span><span class="c num" style="left:545.8px">000000</span><span class="c cc" style="left:624.7px;color:#555;letter-spacing:0.9px">--</span><span class="c cc sm" style="left:687.5px">未锁定</span></div>
<div class="abs" style="left:111px;top:420.8px;width:702px;height:0.8px;background:#eceef2"></div>
<div class="abs" style="left:816.4px;top:127.6px;width:2.3px;height:23.7px;background:#dce4f5;border-radius:1px"></div>

<div class="abs" style="left:114.5px;top:427.9px;font-size:6.1px;color:#666;white-space:nowrap">共13678条记录</div>

<!-- pagination -->
<svg class="abs" style="left:631.2px;top:429px" width="6.4" height="6" viewBox="0 0 6.4 6"><path d="M3 0.5L0.8 3L3 5.5 M5.6 0.5L3.4 3L5.6 5.5" stroke="#c4c8d0" stroke-width="0.8" fill="none"/></svg>
<svg class="abs" style="left:647px;top:429px" width="6.4" height="6" viewBox="0 0 6.4 6"><path d="M3 0.5L0.8 3L3 5.5" stroke="#c4c8d0" stroke-width="0.8" fill="none"/></svg>
<div class="abs" style="left:655.5px;top:429px;width:0.7px;height:6px;background:#e0e3e8"></div>
<div class="abs" style="left:664px;top:429.3px;font-size:5.9px;line-height:7px;color:#555;white-space:nowrap">跳转</div>
<div class="abs" style="left:681px;top:425.8px;width:20.5px;height:12.1px;border:0.8px solid #d8dce3;border-radius:2px;background:#fff;font-size:6.1px;color:#333;line-height:12px;padding-left:3px">1</div>
<div class="abs" style="left:706.6px;top:429.3px;font-size:5.9px;line-height:7px;color:#555;white-space:nowrap">10页</div>
<div class="abs" style="left:721px;top:429px;width:0.7px;height:6px;background:#e0e3e8"></div>
<svg class="abs" style="left:731.6px;top:429px" width="6.4" height="6" viewBox="0 0 6.4 6"><path d="M0.8 0.5L3 3L0.8 5.5" stroke="#c4c8d0" stroke-width="0.8" fill="none"/></svg>
<svg class="abs" style="left:744.5px;top:429px" width="6.4" height="6" viewBox="0 0 6.4 6"><path d="M0.8 0.5L3 3L0.8 5.5 M3.4 0.5L5.6 3L3.4 5.5" stroke="#c4c8d0" stroke-width="0.8" fill="none"/></svg>
<div class="abs" style="left:758.8px;top:429.3px;font-size:5.9px;line-height:7px;color:#555;white-space:nowrap">每页显示</div>
<div class="abs" style="left:786.4px;top:425.8px;width:26.8px;height:12.1px;border:0.8px solid #d8dce3;border-radius:2px;background:#fff;font-size:6.1px;color:#333;line-height:12px;padding-left:3.6px">20<svg class="abs" style="left:20.6px;top:4.6px" width="3.6" height="2.4" viewBox="0 0 8 5"><path d="M0.8 0.8L4 4L7.2 0.8" stroke="#aaa" stroke-width="1.2" fill="none"/></svg></div>
<div class="abs" style="left:817.6px;top:429.3px;font-size:5.9px;line-height:7px;color:#555;white-space:nowrap">行</div>
<!-- footer -->
<div class="abs" style="left:86px;top:449.4px;width:752px;height:14.6px;background:#eceef0"></div>
<div class="abs" style="left:87px;top:449.4px;width:34.7px;height:14.6px;background:#e1e1e1"></div>
<div class="abs" style="left:96.9px;top:450.6px;font-size:5.35px;line-height:14px;color:#333;white-space:nowrap">主页</div>
<svg width="3.6" height="3.6" viewBox="0 0 4 4" style="position:absolute;left:111.80px;top:455.7px"><path d="M0.4 0.4L3.6 3.6M3.6 0.4L0.4 3.6" stroke="#444" stroke-width="0.75"/></svg>
<div class="abs" style="left:122.7px;top:449.4px;width:38.8px;height:14.6px;background:#e1e1e1"></div>
<div class="abs" style="left:130.2px;top:450.6px;font-size:5.35px;line-height:14px;color:#333;white-space:nowrap">1104系统</div>
<svg width="3.6" height="3.6" viewBox="0 0 4 4" style="position:absolute;left:154.60px;top:455.7px"><path d="M0.4 0.4L3.6 3.6M3.6 0.4L0.4 3.6" stroke="#444" stroke-width="0.75"/></svg>
<div class="abs" style="left:162.5px;top:449.4px;width:39px;height:14.6px;background:#e1e1e1"></div>
<div class="abs" style="left:169.8px;top:450.6px;font-size:5.35px;line-height:14px;color:#333;white-space:nowrap">系统管理</div>
<svg width="3.6" height="3.6" viewBox="0 0 4 4" style="position:absolute;left:194.00px;top:455.7px"><path d="M0.4 0.4L3.6 3.6M3.6 0.4L0.4 3.6" stroke="#444" stroke-width="0.75"/></svg>
<div class="abs" style="left:202.5px;top:449.4px;width:39.4px;height:14.6px;background:#e1e1e1"></div>
<div class="abs" style="left:209.2px;top:450.6px;font-size:5.35px;line-height:14px;color:#333;white-space:nowrap">现金统计</div>
<svg width="3.6" height="3.6" viewBox="0 0 4 4" style="position:absolute;left:232.70px;top:455.7px"><path d="M0.4 0.4L3.6 3.6M3.6 0.4L0.4 3.6" stroke="#444" stroke-width="0.75"/></svg>
<div class="abs" style="left:242.5px;top:449.4px;width:38.6px;height:14.6px;background:#3081ea"></div>
<div class="abs" style="left:248.4px;top:450.6px;font-size:5.35px;line-height:14px;color:#fff;white-space:nowrap">补录系统</div>
<svg width="3.6" height="3.6" viewBox="0 0 4 4" style="position:absolute;left:272.40px;top:455.7px"><path d="M0.4 0.4L3.6 3.6M3.6 0.4L0.4 3.6" stroke="#fff" stroke-width="0.75"/></svg>
<div class="abs" style="left:375.7px;top:452.5px;font-size:5.17px;color:#555;white-space:nowrap">北京银丰新融科技开发有限公司版权所有 Copyright(C) . All Rights Reserved</div>

</body></html>
